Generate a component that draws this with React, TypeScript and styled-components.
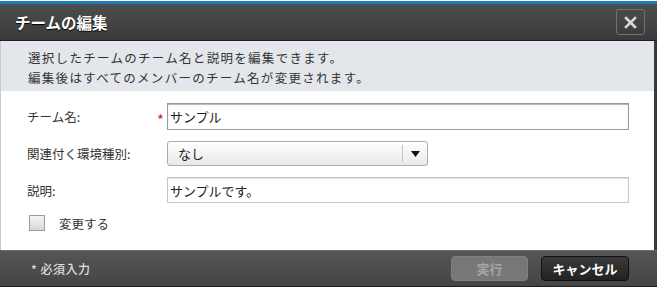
import styled, { createGlobalStyle } from "styled-components";

const GlobalStyle = createGlobalStyle`
  body {
    margin: 0;
    background: #ffffff;
    font-family: "Noto Sans CJK JP", "Noto Sans", sans-serif;
  }
`;

const Dialog = styled.div`
  width: 657px;
  margin-top: 1px;
  display: flex;
  flex-direction: column;
  border-top: 3px solid #1b7cc4;
`;

const TitleBar = styled.div`
  height: 36px;
  display: flex;
  align-items: center;
  justify-content: space-between;
  padding: 0 12px 0 15px;
  background: linear-gradient(#4e4e4e, #3a3a3a);
  border-bottom: 1px solid #1e1e1e;
`;

const Title = styled.h1`
  margin: 0;
  font-size: 15.5px;
  font-weight: 700;
  color: #ffffff;
  text-shadow: 0 1px 1px #000;
`;

const CloseButton = styled.button`
  width: 29px;
  height: 26px;
  padding: 0;
  display: flex;
  align-items: center;
  justify-content: center;
  background: linear-gradient(#4a4a4a, #3c3c3c);
  border: 1px solid #727272;
  border-radius: 3px;
  cursor: pointer;
`;

const Body = styled.div`
  display: flex;
  flex-direction: column;
  border-left: 1px solid #c9c9c9;
  border-right: 3px solid #3a3a3a;
`;

const Description = styled.div`
  background: #e3e6eb;
  padding: 7px 0 3px 27px;
  font-size: 12.5px;
  line-height: 20px;
  color: #333333;
  letter-spacing: 1.3px;
`;

const Form = styled.div`
  background: #ffffff;
  display: flex;
  flex-direction: column;
  gap: 10px;
  padding: 12px 0 17px 26px;
`;

const Row = styled.div<{ $h: number }>`
  display: flex;
  align-items: center;
  height: ${(p) => p.$h}px;
`;

const Label = styled.div`
  width: 140px;
  flex: none;
  display: flex;
  justify-content: space-between;
  align-items: center;
  font-size: 12.5px;
  color: #333333;
`;

const Required = styled.span`
  color: #d0282a;
  font-size: 15px;
  line-height: 1;
  margin-right: 3px;
  position: relative;
  top: 3px;
`;

const TextInput = styled.input<{ $focused?: boolean }>`
  box-sizing: border-box;
  width: 462px;
  height: 100%;
  padding: 0 2px;
  font-family: inherit;
  font-size: 13px;
  color: #222222;
  background: #ffffff;
  border: 1px solid ${(p) => (p.$focused ? "#9a9a9a" : "#c6c6c6")};
  box-shadow: inset 0 1px 1px ${(p) => (p.$focused ? "#b5b5b5" : "#dddddd")};
  outline: none;
`;

const Select = styled.div`
  box-sizing: border-box;
  width: 261px;
  height: 25px;
  display: flex;
  align-items: center;
  background: linear-gradient(#ffffff, #e9e9e9);
  border: 1px solid #a7adb5;
  border-radius: 3px;
  font-size: 13px;
  color: #222222;
`;

const SelectValue = styled.span`
  flex: 1;
  padding-left: 10px;
`;

const SelectArrow = styled.span`
  width: 24px;
  height: 17px;
  display: flex;
  align-items: center;
  justify-content: center;
  border-left: 1px solid #c4c4c4;
`;

const CheckRow = styled.label`
  display: flex;
  align-items: center;
  gap: 14px;
  padding-left: 2px;
  font-size: 12.5px;
  color: #333333;
`;

const CheckBox = styled.span`
  box-sizing: border-box;
  width: 16px;
  height: 16px;
  border: 1px solid #9c9c9c;
  background: linear-gradient(#f4f4f4, #d8d8d8);
`;

const Footer = styled.div`
  height: 37px;
  box-sizing: border-box;
  display: flex;
  align-items: center;
  justify-content: space-between;
  padding: 0 28px 0 31px;
  background: linear-gradient(#555555, #454545);
  border-top: 1px solid #6a6a6a;
  border-bottom: 1px solid #1e1e1e;
`;

const Note = styled.span`
  font-size: 12px;
  color: #dddddd;
  font-weight: 500;
  letter-spacing: 0.5px;
`;

const Buttons = styled.div`
  display: flex;
  gap: 13px;
  align-items: center;
`;

const FooterButton = styled.button<{ $disabled?: boolean }>`
  box-sizing: border-box;
  height: 25px;
  width: ${(p) => (p.$disabled ? 77 : 88)}px;
  font-family: inherit;
  font-size: 13px;
  font-weight: 700;
  border-radius: 4px;
  color: ${(p) => (p.$disabled ? "#a4a4a4" : "#ffffff")};
  background: ${(p) =>
    p.$disabled ? "#777777" : "linear-gradient(#3a3a3a, #222222)"};
  border: 1px solid ${(p) => (p.$disabled ? "#7f7f7f" : "#111111")};
  cursor: ${(p) => (p.$disabled ? "default" : "pointer")};
`;

export default function App() {
  return (
    <>
      <GlobalStyle />
      <Dialog>
        <TitleBar>
          <Title>チームの編集</Title>
          <CloseButton aria-label="閉じる">
            <svg width="13" height="13" viewBox="0 0 13 13">
              <path
                d="M2 2 L11 11 M11 2 L2 11"
                stroke="#d8d8d8"
                strokeWidth="2.6"
                strokeLinecap="square"
              />
            </svg>
          </CloseButton>
        </TitleBar>
        <Body>
          <Description>
            選択したチームのチーム名と説明を編集できます。
            <br />
            編集後はすべてのメンバーのチーム名が変更されます。
          </Description>
          <Form>
            <Row $h={27}>
              <Label>
                チーム名:<Required>*</Required>
              </Label>
              <TextInput $focused defaultValue="サンプル" />
            </Row>
            <Row $h={27}>
              <Label>関連付く環境種別:</Label>
              <Select>
                <SelectValue>なし</SelectValue>
                <SelectArrow>
                  <svg width="9" height="6" viewBox="0 0 9 6">
                    <path d="M0 0 H9 L4.5 6 Z" fill="#111" />
                  </svg>
                </SelectArrow>
              </Select>
            </Row>
            <Row $h={26}>
              <Label>説明:</Label>
              <TextInput defaultValue="サンプルです。" />
            </Row>
            <Row $h={20}>
              <CheckRow>
                <CheckBox />
                変更する
              </CheckRow>
            </Row>
          </Form>
        </Body>
        <Footer>
          <Note>* 必須入力</Note>
          <Buttons>
            <FooterButton $disabled>実行</FooterButton>
            <FooterButton>キャンセル</FooterButton>
          </Buttons>
        </Footer>
      </Dialog>
    </>
  );
}
